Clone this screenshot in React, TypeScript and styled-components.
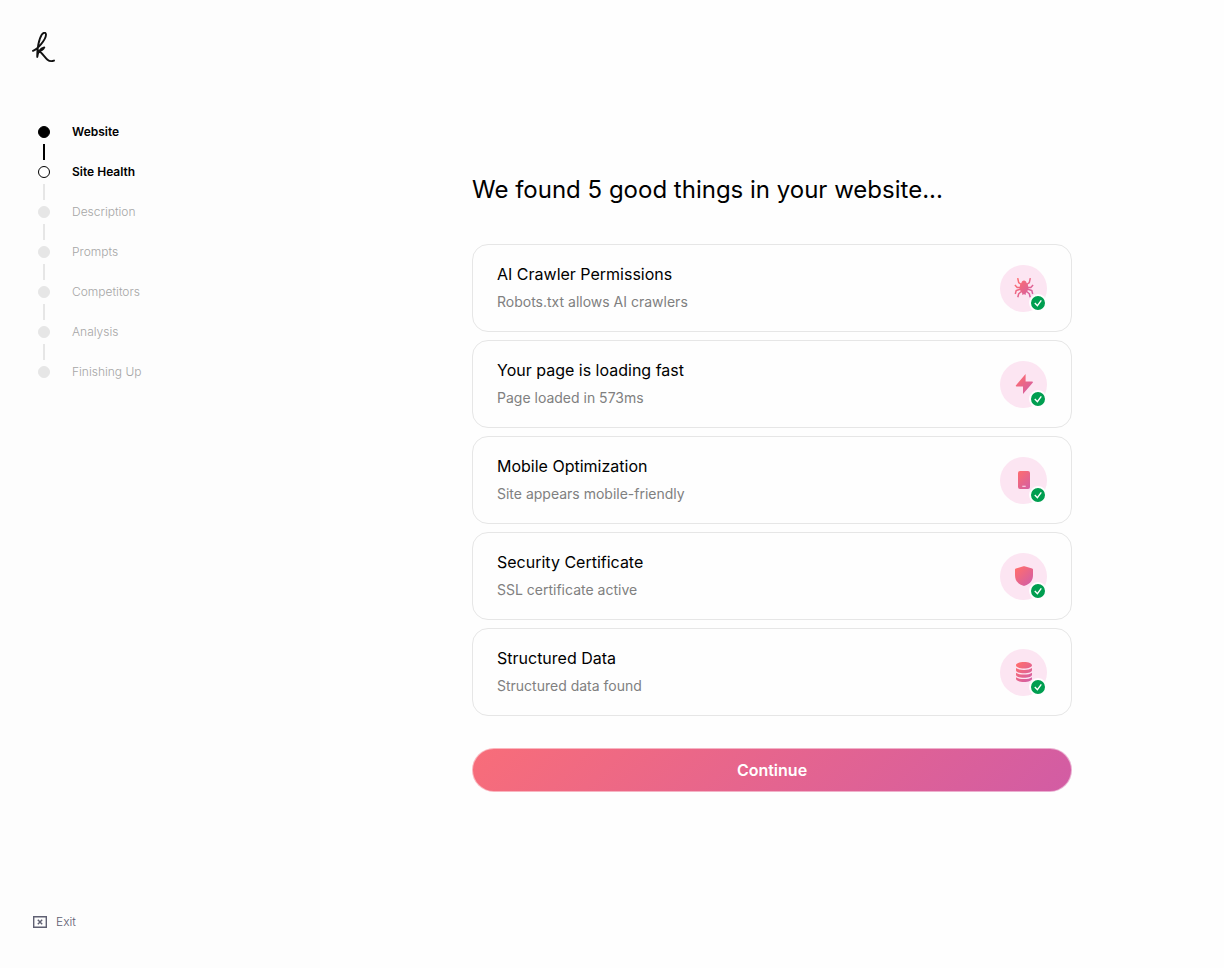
import React from "react";
import styled, { createGlobalStyle } from "styled-components";

const GlobalStyle = createGlobalStyle`
  *, *::before, *::after { box-sizing: border-box; }
  body {
    margin: 0;
    background: #fefefe;
    color: #000;
    font-family: Inter, "Liberation Sans", sans-serif;
    -webkit-font-smoothing: antialiased;
  }
`;

const Layout = styled.div`
  display: flex;
  min-height: 100vh;
`;

const Sidebar = styled.aside`
  display: flex;
  flex-direction: column;
  flex: 0 0 320px;
  padding: 32px;
  background: #fdfdfd;
`;

const Logo = styled.svg`
  display: block;
  width: 24px;
  height: 32px;
`;

const Steps = styled.ol`
  display: flex;
  flex-direction: column;
  gap: 24px;
  margin: 60px 0 0;
  padding: 0;
  list-style: none;
`;

type StepState = "done" | "current" | "upcoming";

const Step = styled.li<{ $state: StepState }>`
  position: relative;
  display: flex;
  align-items: center;
  gap: 22px;
  height: 16px;
  padding-left: 6px;
  font-size: 12px;
  line-height: 16px;
  font-weight: ${(p) => (p.$state === "upcoming" ? 300 : 600)};
  color: ${(p) => (p.$state === "upcoming" ? "#a6a6a6" : "#000")};

  &:not(:last-child)::after {
    content: "";
    position: absolute;
    left: 11px;
    top: 20px;
    width: 2px;
    height: 16px;
    background: ${(p) => (p.$state === "done" ? "#000" : "#e6e6e6")};
  }
`;

const Dot = styled.span<{ $state: StepState }>`
  width: 12px;
  height: 12px;
  border-radius: 50%;
  border: 1px solid ${(p) => (p.$state === "upcoming" ? "#e6e6e6" : "#000")};
  background: ${(p) => ({ done: "#000", current: "#fff", upcoming: "#e6e6e6" })[p.$state]};
`;

const ExitButton = styled.button`
  display: flex;
  align-items: center;
  align-self: flex-start;
  gap: 8px;
  margin-top: auto;
  margin-bottom: 6px;
  padding: 0;
  border: 0;
  background: none;
  color: #5f6072;
  font: 300 12px/16px Inter, "Liberation Sans", sans-serif;
  cursor: pointer;

  svg { display: block; }
`;

const Main = styled.main`
  display: flex;
  flex: 1;
  align-items: center;
  justify-content: center;
  padding: 32px;
`;

const Content = styled.section`
  width: 100%;
  max-width: 600px;
`;

const Title = styled.h1`
  margin: 0 0 40px;
  font-size: 24px;
  line-height: 28px;
  font-weight: 400;
`;

const CardList = styled.ul`
  display: flex;
  flex-direction: column;
  gap: 8px;
  margin: 0;
  padding: 0;
  list-style: none;
`;

const Card = styled.li`
  display: flex;
  align-items: flex-start;
  justify-content: space-between;
  min-height: 88px;
  padding: 17px 24px;
  border: 1px solid #e6e6e6;
  border-radius: 16px;
  background: #fefefe;
`;

const CardTitle = styled.h2`
  margin: 0 0 6px;
  font-size: 16px;
  line-height: 24px;
  font-weight: 400;
`;

const CardText = styled.p`
  margin: 0;
  font-size: 14px;
  line-height: 20px;
  color: #808080;
`;

const IconCircle = styled.span`
  position: relative;
  display: grid;
  place-items: start;
  width: 47px;
  height: 47px;
  margin-top: 3px;
  padding: 11px 0 0 12px;
  border-radius: 50%;
  background: #fce5f2;

  > svg { display: block; }
`;

const CheckBadge = styled.span`
  position: absolute;
  right: 0;
  bottom: 0;
  display: grid;
  place-items: center;
  width: 18px;
  height: 18px;
  border: 2px solid #fefefe;
  border-radius: 50%;
  background: #009e50;
`;

const ContinueButton = styled.button`
  display: block;
  width: 100%;
  height: 44px;
  margin-top: 32px;
  border: 1px solid rgba(255, 255, 255, 0.5);
  border-radius: 22px;
  background: linear-gradient(135deg, #f86d79, #d25ca4) border-box;
  color: #fff;
  font: 600 16px/24px Inter, "Liberation Sans", sans-serif;
  cursor: pointer;
`;

type IconName = "spider" | "bolt" | "phone" | "shield" | "database";

const glyphs: Record<IconName, (fill: string) => React.ReactNode> = {
  spider: (fill) => (
    <>
      <path
        d="M5.700 2.200 6.700 6.700 10 9M18.300 2.200 17.300 6.700 14 9M2.900 9l2.300 2.500H9M21.100 9l-2.300 2.500H15M3.300 18l.9-3.500 4.800-1.500M20.700 18l-.9-3.500-4.800-1.500M5.800 21.300l.9-3.500L10 15M18.200 21.300l-.9-3.500L14 15"
        fill="none"
        stroke={fill}
        strokeWidth="1.500"
        strokeLinejoin="round"
      />
      <path
        d="M12 4.600c1.400 0 2.400.9 2.600 2.500 1.100 1.200 1.700 2.700 1.700 4.500 0 2.400-1.100 4.300-2.400 5.300l-.4 2h-.9v-1h-1.200v1h-.9l-.4-2c-1.300-1-2.400-2.900-2.400-5.300 0-1.800.6-3.300 1.700-4.500.2-1.600 1.200-2.500 2.600-2.500Z"
        fill={fill}
      />
    </>
  ),
  bolt: (fill) => <path d="M13.600 2.100v7.400h6.600c.7 0 1 .7.500 1.200L11 21.900v-7.400H4.500c-.7 0-1-.7-.5-1.200L13.600 2.100Z" fill={fill} />,
  phone: (fill) => (
    <path
      fillRule="evenodd"
      d="M8 3h8a2 2 0 0 1 2 2v14a2 2 0 0 1-2 2H8a2 2 0 0 1-2-2V5a2 2 0 0 1 2-2Zm2.300 14.800v1h3.400v-1h-3.400Z"
      fill={fill}
    />
  ),
  shield: (fill) => (
    <path
      d="M12.500 2.200 20.200 4.600c.5.2.8.5.8 1V11c0 5.500-2.700 8.800-8.300 10.800-.5.2-.9.2-1.400 0C5.700 19.800 3 16.500 3 11V5.600c0-.5.3-.8.8-1l7.700-2.400a1.800 1.800 0 0 1 1 0Z"
      fill={fill}
    />
  ),
  database: (fill) => (
    <path
      d="M12 2c4.800 0 8 1.500 8 3.300S16.800 8.600 12 8.600 4 7.100 4 5.300 7.200 2 12 2ZM4 8c1.600 1.200 4.600 1.900 8 1.900S18.400 9.200 20 8v2.200c0 1.700-3.400 3.100-8 3.100s-8-1.400-8-3.100V8Zm0 4.700c1.600 1.200 4.600 1.900 8 1.900s6.400-.7 8-1.900v2c0 1.700-3.400 3.100-8 3.100s-8-1.400-8-3.100v-2Zm0 4.500c1.600 1.200 4.600 1.900 8 1.900s6.400-.7 8-1.900v1.600c0 1.800-3.400 3.200-8 3.200s-8-1.400-8-3.200v-1.600Z"
      fill={fill}
    />
  ),
};

function GlyphIcon({ name }: { name: IconName }) {
  const id = `tint-${name}`;
  return (
    <svg width="24" height="24" viewBox="0 0 24 24" aria-hidden="true">
      <defs>
        <linearGradient id={id} gradientUnits="userSpaceOnUse" x1="5" y1="5" x2="21" y2="21">
          <stop stopColor="#fd6d70" />
          <stop offset="1" stopColor="#cf5da9" />
        </linearGradient>
      </defs>
      {glyphs[name](`url(#${id})`)}
    </svg>
  );
}

const steps: { label: string; state: StepState }[] = [
  { label: "Website", state: "done" },
  { label: "Site Health", state: "current" },
  { label: "Description", state: "upcoming" },
  { label: "Prompts", state: "upcoming" },
  { label: "Competitors", state: "upcoming" },
  { label: "Analysis", state: "upcoming" },
  { label: "Finishing Up", state: "upcoming" },
];

const findings: { title: string; text: string; icon: IconName }[] = [
  { title: "AI Crawler Permissions", text: "Robots.txt allows AI crawlers", icon: "spider" },
  { title: "Your page is loading fast", text: "Page loaded in 573ms", icon: "bolt" },
  { title: "Mobile Optimization", text: "Site appears mobile-friendly", icon: "phone" },
  { title: "Security Certificate", text: "SSL certificate active", icon: "shield" },
  { title: "Structured Data", text: "Structured data found", icon: "database" },
];

export default function App() {
  return (
    <Layout>
      <GlobalStyle />
      <Sidebar>
        <Logo viewBox="0 0 24 32" fill="none" stroke="#111" strokeWidth="1.900" strokeLinecap="round" strokeLinejoin="round" aria-hidden="true">
          <path d="M1 18.800C5.500 17 13.800 8 14 2.800c0-2.800-2.600-2.600-4.300 0C6.900 7.100 5 17 5.300 25c.6-5 3.500-8.600 7-9.600-1.100 2.200-3.200 3.400-5.600 3.400 3 1.300 5.800 6.300 8.800 8.900 2.200 1.900 4.600 1.600 6.500.9" />
        </Logo>
        <Steps>
          {steps.map((s) => (
            <Step key={s.label} $state={s.state} aria-current={s.state === "current" ? "step" : undefined}>
              <Dot $state={s.state} />
              {s.label}
            </Step>
          ))}
        </Steps>
        <ExitButton type="button">
          <svg width="16" height="16" viewBox="0 0 16 16" fill="none" stroke="currentColor" aria-hidden="true">
            <path d="M1.700 2.700h12.600v10.600H1.700z" strokeWidth="1.400" />
            <path d="m5.800 5.800 4.400 4.400m0-4.400-4.400 4.400" strokeWidth="1.400" />
          </svg>
          Exit
        </ExitButton>
      </Sidebar>
      <Main>
        <Content>
          <Title>We found 5 good things in your website...</Title>
          <CardList>
            {findings.map((f) => (
              <Card key={f.title}>
                <div>
                  <CardTitle>{f.title}</CardTitle>
                  <CardText>{f.text}</CardText>
                </div>
                <IconCircle>
                  <GlyphIcon name={f.icon} />
                  <CheckBadge>
                    <svg width="10" height="10" viewBox="0 0 10 10" fill="none" stroke="#fff" strokeWidth="1.400" aria-hidden="true">
                      <path d="M1.800 5 4.400 7.700 8.300 2.400" />
                    </svg>
                  </CheckBadge>
                </IconCircle>
              </Card>
            ))}
          </CardList>
          <ContinueButton type="button">Continue</ContinueButton>
        </Content>
      </Main>
    </Layout>
  );
}
